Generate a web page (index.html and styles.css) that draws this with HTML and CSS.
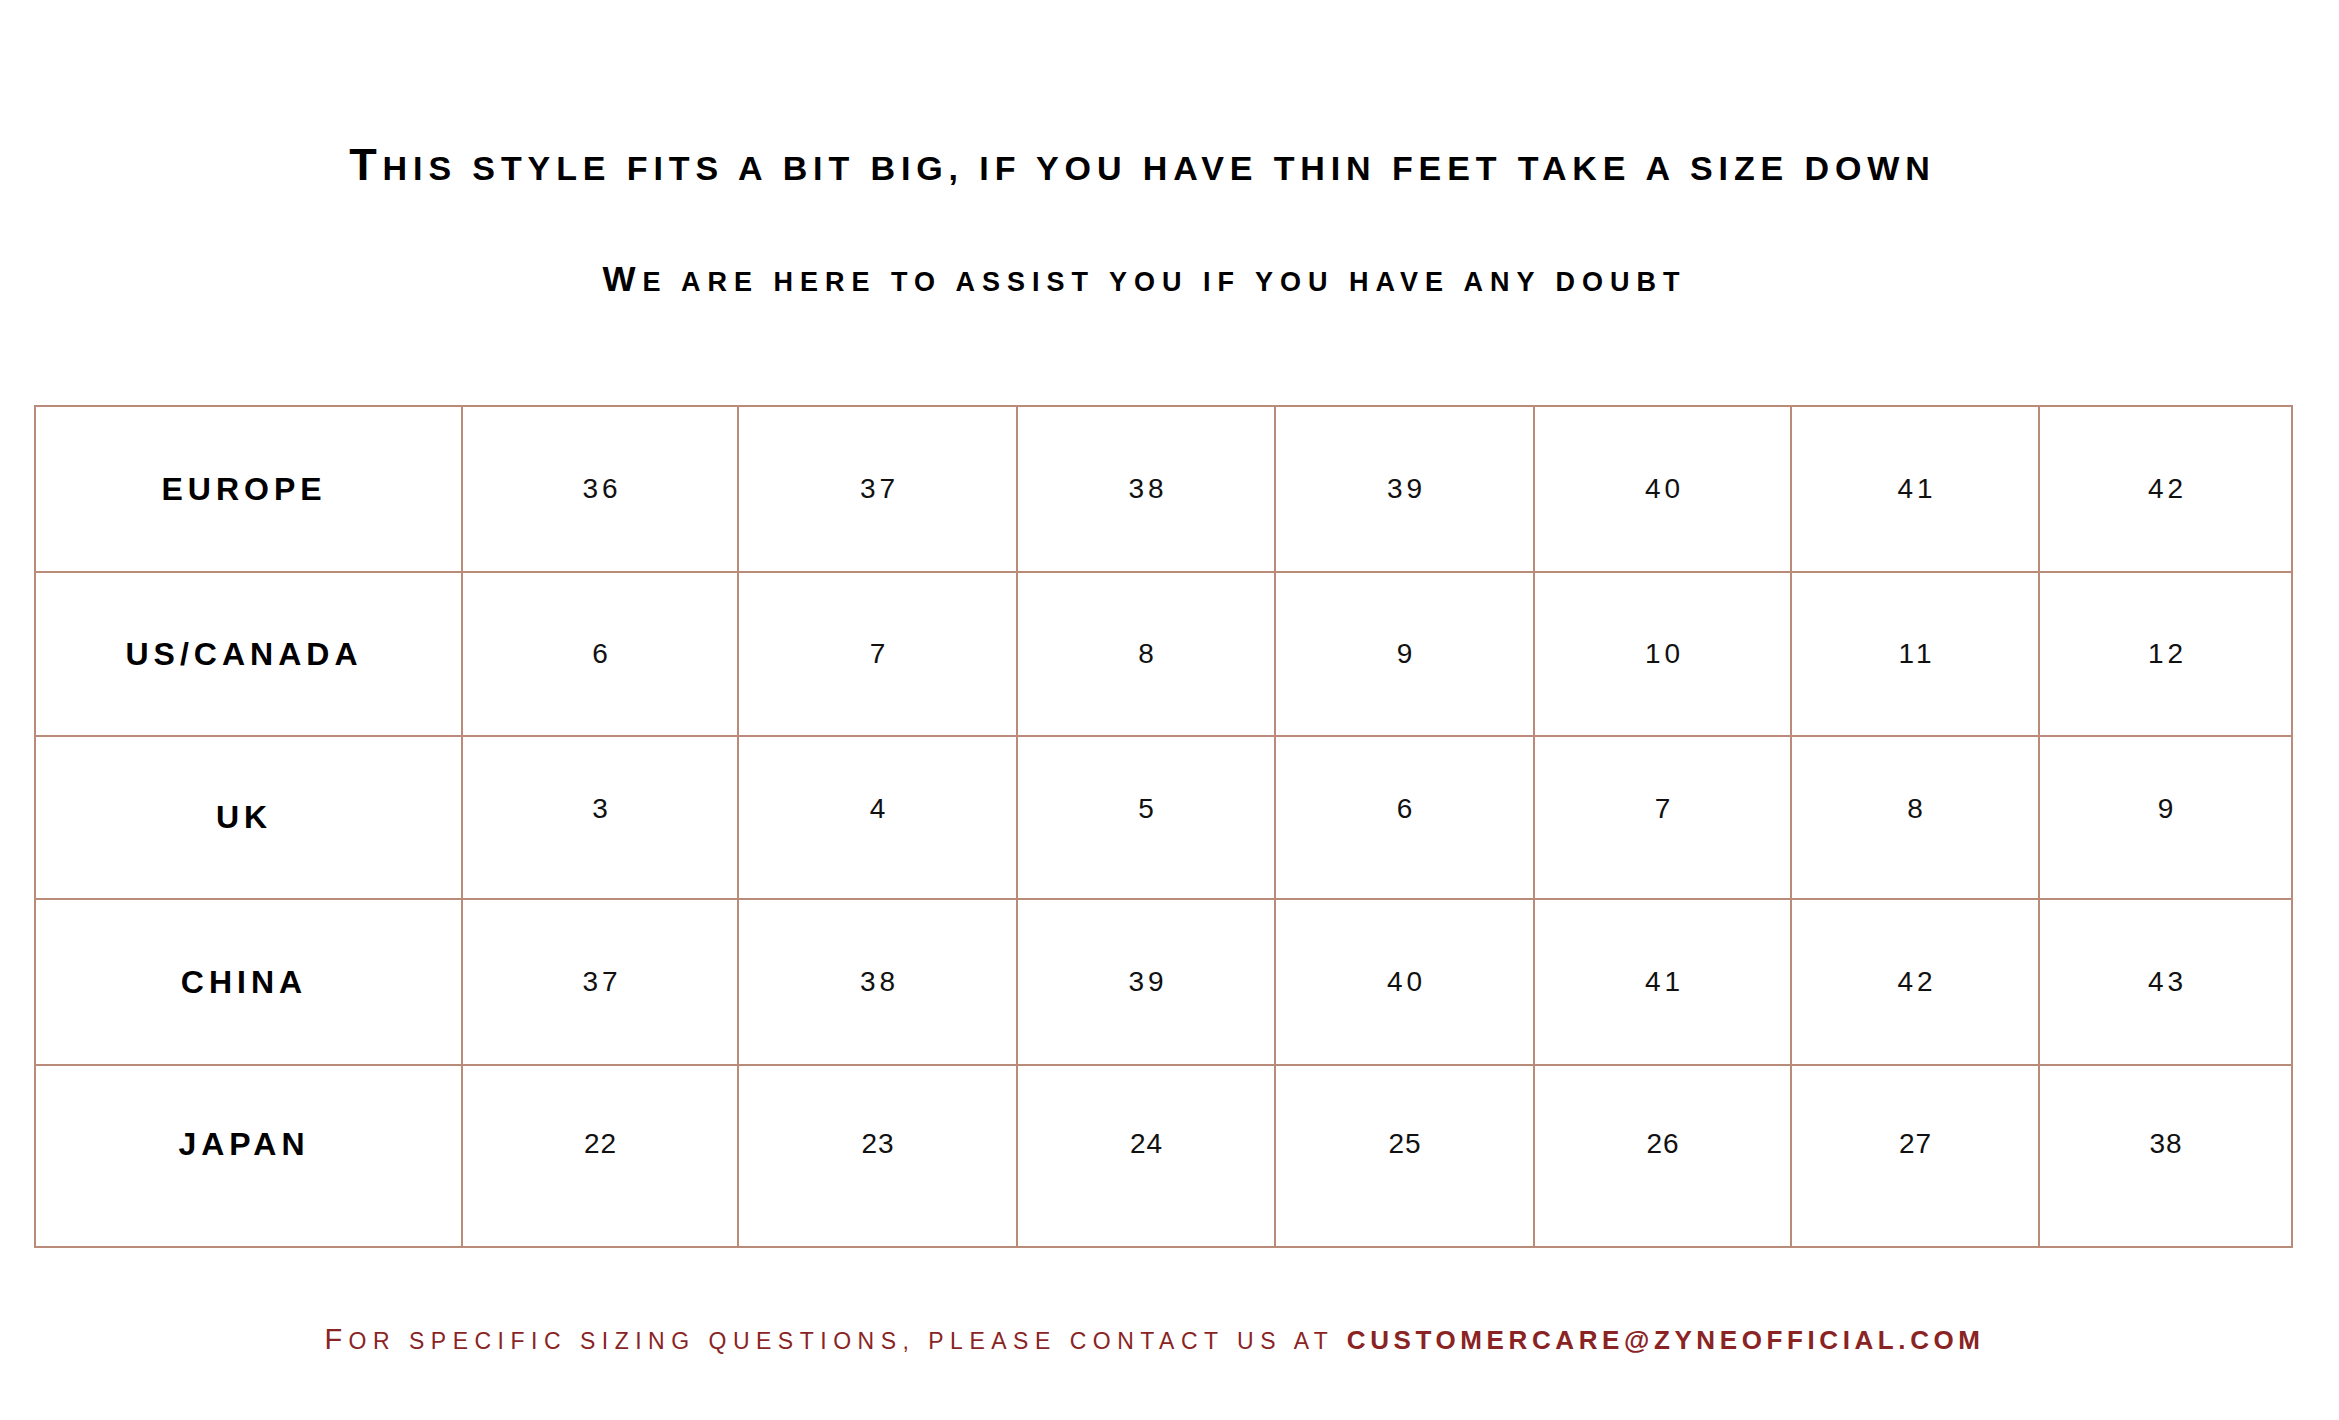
FILE: index.html
```html
<!DOCTYPE html>
<html lang="en">
<head>
<meta charset="utf-8">
<title>Size Guide</title>
<link rel="stylesheet" href="styles.css">
</head>
<body>
<main class="size-guide">
  <h1 class="fit-note">This style fits a bit big, if you have thin feet take a size down</h1>
  <p class="assist-note">We are here to assist you if you have any doubt</p>

  <table class="size-chart">
    <colgroup>
      <col class="col-label">
      <col class="col-a">
      <col class="col-b">
      <col class="col-c">
      <col class="col-d">
      <col class="col-e">
      <col class="col-f">
      <col class="col-g">
    </colgroup>
    <tbody>
      <tr class="row-europe">
        <th>EUROPE</th>
        <td>36</td><td>37</td><td>38</td><td>39</td><td>40</td><td>41</td><td>42</td>
      </tr>
      <tr class="row-us">
        <th>US/CANADA</th>
        <td>6</td><td>7</td><td>8</td><td>9</td><td>10</td><td>11</td><td>12</td>
      </tr>
      <tr class="row-uk">
        <th>UK</th>
        <td>3</td><td>4</td><td>5</td><td>6</td><td>7</td><td>8</td><td>9</td>
      </tr>
      <tr class="row-china">
        <th>CHINA</th>
        <td>37</td><td>38</td><td>39</td><td>40</td><td>41</td><td>42</td><td>43</td>
      </tr>
      <tr class="row-japan">
        <th>JAPAN</th>
        <td>22</td><td>23</td><td>24</td><td>25</td><td>26</td><td>27</td><td>38</td>
      </tr>
    </tbody>
  </table>

  <p class="contact-note">For specific sizing questions, please contact us at <a class="contact-email" href="mailto:customercare@zyneofficial.com">customercare@zyneofficial.com</a></p>
</main>
</body>
</html>
```

FILE: styles.css
```css
html, body {
  margin: 0;
  padding: 0;
  background: #ffffff;
}

body {
  font-family: "Liberation Sans", Arial, sans-serif;
  color: #000000;
}

.size-guide {
  width: 2339px;
  display: flex;
  flex-direction: column;
  align-items: flex-start;
  padding-top: 140px;
}

.fit-note {
  align-self: stretch;
  margin: 0;
  padding-right: 54px;
  text-align: center;
  font-size: 34px;
  font-weight: 700;
  line-height: 50px;
  letter-spacing: 5.9px;
  text-transform: uppercase;
}

.fit-note::first-letter {
  font-size: 45px;
}

.assist-note {
  align-self: stretch;
  margin: 66px 0 0 0;
  padding-right: 50px;
  text-align: center;
  font-size: 27px;
  font-weight: 700;
  line-height: 40px;
  letter-spacing: 7px;
  text-transform: uppercase;
}

.assist-note::first-letter {
  font-size: 35px;
}

.size-chart {
  margin: 103px 0 0 34px;
  width: 2257px;
  table-layout: fixed;
  border-collapse: collapse;
  border: 2px solid #b98b78;
}

.col-label { width: 427px; }
.col-a { width: 276px; }
.col-b { width: 279px; }
.col-c { width: 258px; }
.col-d { width: 259px; }
.col-e { width: 257px; }
.col-f { width: 248px; }
.col-g { width: 253px; }

.size-chart th,
.size-chart td {
  border: 2px solid #b98b78;
  padding: 0;
  text-align: center;
  vertical-align: middle;
}

.size-chart th {
  font-size: 32px;
  font-weight: 700;
  letter-spacing: 5px;
  padding-right: 9px;
  color: #000000;
}

.size-chart td {
  font-size: 28px;
  font-weight: 400;
  letter-spacing: 4px;
  padding-left: 4px;
  color: #111111;
}

.row-europe { height: 166px; }
.row-us { height: 164px; }
.row-uk { height: 163px; }
.row-china { height: 166px; }
.row-japan { height: 182px; }

.row-uk td { padding-bottom: 18px; }
.row-japan th,
.row-japan td { padding-bottom: 24px; }
.row-japan td { letter-spacing: 1px; padding-left: 1px; }

.contact-note {
  align-self: stretch;
  margin: 73px 0 0 0;
  padding-right: 30px;
  text-align: center;
  color: #8a2424;
  font-size: 23px;
  font-weight: 400;
  line-height: 36px;
  letter-spacing: 6.5px;
  text-transform: uppercase;
}

.contact-note::first-letter {
  font-size: 29px;
}

.contact-email {
  color: #8a2424;
  text-decoration: none;
  font-size: 26px;
  font-weight: 700;
  letter-spacing: 4.6px;
}
```
